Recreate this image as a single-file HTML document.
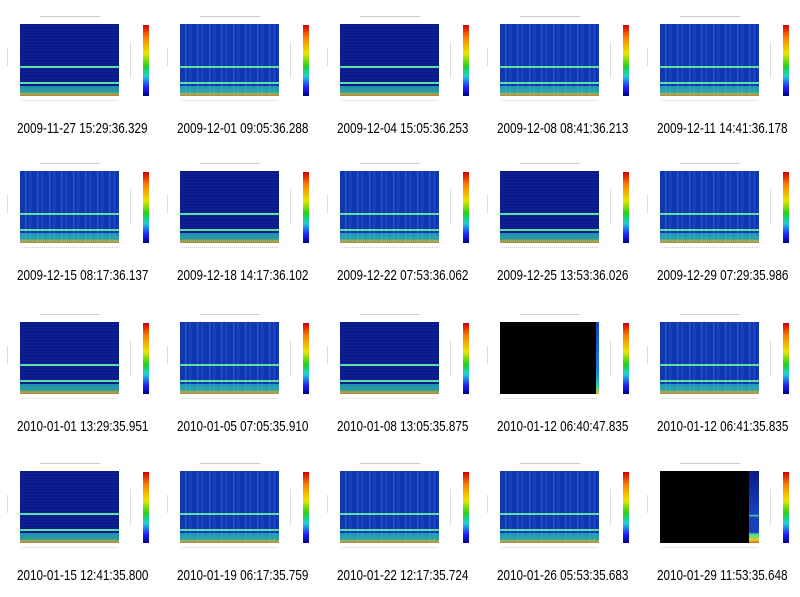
<!DOCTYPE html>
<html><head><meta charset="utf-8"><style>
body{margin:0;width:800px;height:596px;background:#fff;position:relative;overflow:hidden;font-family:"Liberation Sans",sans-serif}
.c{position:absolute;width:160px;height:150px}
.t{position:absolute;left:40px;top:16px;width:60px;height:1px;background:#ccc}
.p{position:absolute;left:20px;top:24px;width:99px;height:72px;background:
linear-gradient(to bottom,transparent 0,transparent 62px,rgba(40,190,200,.7) 62px,rgba(60,210,160,.7) 68px,rgba(200,210,60,.8) 70px,rgba(230,140,40,.8) 72px),
repeating-linear-gradient(to bottom,transparent 0,transparent 2px,rgba(40,90,220,.25) 2px,transparent 3px),
#0a1a8a;box-sizing:border-box}
.p.b{background:
linear-gradient(to bottom,transparent 0,transparent 62px,rgba(40,190,200,.7) 62px,rgba(60,210,160,.7) 68px,rgba(200,210,60,.8) 70px,rgba(230,140,40,.8) 72px),
repeating-linear-gradient(to right,transparent 0,transparent 5px,rgba(60,170,255,.45) 5px,transparent 7px,transparent 9px,rgba(40,120,240,.35) 10px,transparent 12px),
#1236b0}
.h1,.h2{position:absolute;left:20px;width:99px;height:2px;background:#5ee0a0}
.h1{top:66px}.h2{top:82px}
.p.k{background:#000}
.s{position:absolute;right:0;top:0;bottom:0;background:linear-gradient(#1040c0,#2080e0 70%,#30d0a0 90%,#e0c020)}
.cb{position:absolute;left:143px;top:25px;width:6px;height:71px;background:linear-gradient(#d00000,#ff8000 18%,#e8e800 40%,#20d020 58%,#20d0d0 72%,#2020ff 88%,#000080)}
.ax{position:absolute;left:22px;top:100px;width:95px;height:1px;border-top:1px dotted #ccc}
.yl{position:absolute;left:7px;top:48px;width:1px;height:18px;background:#ddd}
.yl2{position:absolute;left:130px;top:42px;width:1px;height:36px;background:#ddd}
.cap{position:absolute;left:17px;top:120px;font-size:15px;color:#000;white-space:nowrap;transform:scaleX(0.78);transform-origin:0 0}
</style></head><body>

<div class="c" style="left:0;top:0"><div class="t"></div><div class="p"></div><div class="h1"></div><div class="h2"></div><div class="cb"></div><div class="ax"></div><div class="yl"></div><div class="yl2"></div><div class="cap">2009-11-27 15:29:36.329</div></div>
<div class="c" style="left:160px;top:0"><div class="t"></div><div class="p b"></div><div class="h1"></div><div class="h2"></div><div class="cb"></div><div class="ax"></div><div class="yl"></div><div class="yl2"></div><div class="cap">2009-12-01 09:05:36.288</div></div>
<div class="c" style="left:320px;top:0"><div class="t"></div><div class="p"></div><div class="h1"></div><div class="h2"></div><div class="cb"></div><div class="ax"></div><div class="yl"></div><div class="yl2"></div><div class="cap">2009-12-04 15:05:36.253</div></div>
<div class="c" style="left:480px;top:0"><div class="t"></div><div class="p b"></div><div class="h1"></div><div class="h2"></div><div class="cb"></div><div class="ax"></div><div class="yl"></div><div class="yl2"></div><div class="cap">2009-12-08 08:41:36.213</div></div>
<div class="c" style="left:640px;top:0"><div class="t"></div><div class="p b"></div><div class="h1"></div><div class="h2"></div><div class="cb"></div><div class="ax"></div><div class="yl"></div><div class="yl2"></div><div class="cap">2009-12-11 14:41:36.178</div></div>

<div class="c" style="left:0;top:147px"><div class="t"></div><div class="p b"></div><div class="h1"></div><div class="h2"></div><div class="cb"></div><div class="ax"></div><div class="yl"></div><div class="yl2"></div><div class="cap">2009-12-15 08:17:36.137</div></div>
<div class="c" style="left:160px;top:147px"><div class="t"></div><div class="p"></div><div class="h1"></div><div class="h2"></div><div class="cb"></div><div class="ax"></div><div class="yl"></div><div class="yl2"></div><div class="cap">2009-12-18 14:17:36.102</div></div>
<div class="c" style="left:320px;top:147px"><div class="t"></div><div class="p b"></div><div class="h1"></div><div class="h2"></div><div class="cb"></div><div class="ax"></div><div class="yl"></div><div class="yl2"></div><div class="cap">2009-12-22 07:53:36.062</div></div>
<div class="c" style="left:480px;top:147px"><div class="t"></div><div class="p"></div><div class="h1"></div><div class="h2"></div><div class="cb"></div><div class="ax"></div><div class="yl"></div><div class="yl2"></div><div class="cap">2009-12-25 13:53:36.026</div></div>
<div class="c" style="left:640px;top:147px"><div class="t"></div><div class="p b"></div><div class="h1"></div><div class="h2"></div><div class="cb"></div><div class="ax"></div><div class="yl"></div><div class="yl2"></div><div class="cap">2009-12-29 07:29:35.986</div></div>

<div class="c" style="left:0;top:298px"><div class="t"></div><div class="p"></div><div class="h1"></div><div class="h2"></div><div class="cb"></div><div class="ax"></div><div class="yl"></div><div class="yl2"></div><div class="cap">2010-01-01 13:29:35.951</div></div>
<div class="c" style="left:160px;top:298px"><div class="t"></div><div class="p b"></div><div class="h1"></div><div class="h2"></div><div class="cb"></div><div class="ax"></div><div class="yl"></div><div class="yl2"></div><div class="cap">2010-01-05 07:05:35.910</div></div>
<div class="c" style="left:320px;top:298px"><div class="t"></div><div class="p"></div><div class="h1"></div><div class="h2"></div><div class="cb"></div><div class="ax"></div><div class="yl"></div><div class="yl2"></div><div class="cap">2010-01-08 13:05:35.875</div></div>
<div class="c" style="left:480px;top:298px"><div class="t"></div><div class="p k"><div class="s" style="width:3px"></div></div><div class="cb"></div><div class="ax"></div><div class="yl"></div><div class="yl2"></div><div class="cap">2010-01-12 06:40:47.835</div></div>
<div class="c" style="left:640px;top:298px"><div class="t"></div><div class="p b"></div><div class="h1"></div><div class="h2"></div><div class="cb"></div><div class="ax"></div><div class="yl"></div><div class="yl2"></div><div class="cap">2010-01-12 06:41:35.835</div></div>

<div class="c" style="left:0;top:447px"><div class="t"></div><div class="p"></div><div class="h1"></div><div class="h2"></div><div class="cb"></div><div class="ax"></div><div class="yl"></div><div class="yl2"></div><div class="cap">2010-01-15 12:41:35.800</div></div>
<div class="c" style="left:160px;top:447px"><div class="t"></div><div class="p b"></div><div class="h1"></div><div class="h2"></div><div class="cb"></div><div class="ax"></div><div class="yl"></div><div class="yl2"></div><div class="cap">2010-01-19 06:17:35.759</div></div>
<div class="c" style="left:320px;top:447px"><div class="t"></div><div class="p b"></div><div class="h1"></div><div class="h2"></div><div class="cb"></div><div class="ax"></div><div class="yl"></div><div class="yl2"></div><div class="cap">2010-01-22 12:17:35.724</div></div>
<div class="c" style="left:480px;top:447px"><div class="t"></div><div class="p b"></div><div class="h1"></div><div class="h2"></div><div class="cb"></div><div class="ax"></div><div class="yl"></div><div class="yl2"></div><div class="cap">2010-01-26 05:53:35.683</div></div>
<div class="c" style="left:640px;top:447px"><div class="t"></div><div class="p k"><div class="s" style="width:10px;background:linear-gradient(#0a1a8a,#1a40c0 60%,#40e0a0 62%,#1a40c0 64%,#1a40c0 85%,#40e0a0 88%,#e0d020 96%,#e06020)"></div></div><div class="cb"></div><div class="ax"></div><div class="yl"></div><div class="yl2"></div><div class="cap">2010-01-29 11:53:35.648</div></div>

</body></html>
